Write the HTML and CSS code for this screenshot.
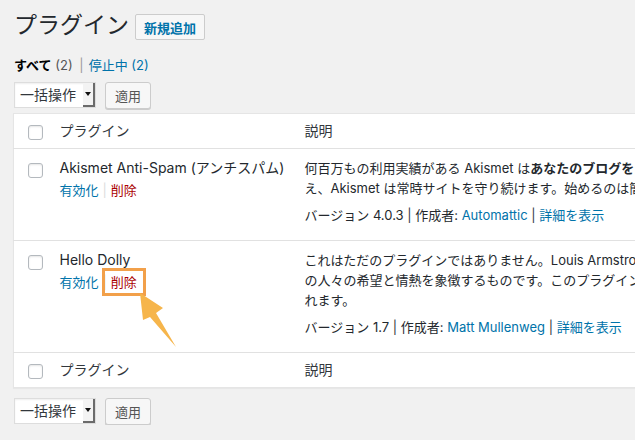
FILE: index.html
```html
<!DOCTYPE html>
<html lang="ja">
<head>
<meta charset="utf-8">
<title>プラグイン</title>
<link rel="stylesheet" href="styles.css">
</head>
<body>
<div class="wrap">
  <div class="page-head">
    <h1 class="page-title">プラグイン</h1>
    <a class="title-action" href="#">新規追加</a>
  </div>
  <ul class="subsubsub">
    <li><span class="current">すべて</span> <span class="count">(2)</span> <span class="sep">|</span></li>
    <li><a href="#">停止中 <span class="count-link">(2)</span></a></li>
  </ul>
  <div class="tablenav">
    <div class="bulk"><span class="bulk-label">一括操作</span><span class="bulk-arrow"><span class="tri"></span></span></div>
    <button class="btn">適用</button>
  </div>
  <table class="plugins">
    <thead>
      <tr>
        <th class="col-check"><span class="cb"></span></th>
        <th class="col-name">プラグイン</th>
        <th class="col-desc">説明</th>
      </tr>
    </thead>
    <tbody>
      <tr>
        <td class="col-check"><span class="cb"></span></td>
        <td class="col-name">
          <div class="plugin-title">Akismet Anti-Spam (アンチスパム)</div>
          <div class="row-actions"><a href="#" class="activate">有効化</a><span class="pipe">|</span><a href="#" class="delete">削除</a></div>
        </td>
        <td class="col-desc">
          <p class="desc">何百万もの利用実績がある Akismet は<strong>あなたのブログをスパムから保護する最良の方法</strong>といえるでしょう。あなたが眠っている間でさ<br>え、Akismet は常時サイトを守り続けます。始めるのは簡単です: Akismet プラグインを有効化し、設定ページで API キーを設定してください。</p>
          <div class="meta">バージョン 4.0.3 <span class="msep">|</span> 作成者: <a href="#">Automattic</a> <span class="msep">|</span> <a href="#">詳細を表示</a></div>
        </td>
      </tr>
      <tr>
        <td class="col-check"><span class="cb"></span></td>
        <td class="col-name">
          <div class="plugin-title">Hello Dolly</div>
          <div class="row-actions"><a href="#" class="activate">有効化</a><span class="pipe">|</span><a href="#" class="delete highlighted">削除</a></div>
        </td>
        <td class="col-desc">
          <p class="desc">これはただのプラグインではありません。Louis Armstrong によって歌われた最も有名な二つの単語に要約された同一世代のすべて<br>の人々の希望と情熱を象徴するものです。このプラグインを有効にすると、すべての管理画面の右上に「ハロー・ドーリー」の歌詞がランダムに表示さ<br>れます。</p>
          <div class="meta">バージョン 1.7 <span class="msep">|</span> 作成者: <a href="#">Matt Mullenweg</a> <span class="msep">|</span> <a href="#">詳細を表示</a></div>
        </td>
      </tr>
    </tbody>
    <tfoot>
      <tr>
        <th class="col-check"><span class="cb"></span></th>
        <th class="col-name">プラグイン</th>
        <th class="col-desc">説明</th>
      </tr>
    </tfoot>
  </table>
  <div class="tablenav bottom">
    <div class="bulk"><span class="bulk-label">一括操作</span><span class="bulk-arrow"><span class="tri"></span></span></div>
    <button class="btn">適用</button>
  </div>
  <svg class="pointer" width="42" height="60" viewBox="0 0 42 60" aria-hidden="true">
    <polygon points="2,2 25,17 18,22 38,56 12,26 5,29" fill="#f6b54b"/>
  </svg>
</div>
</body>
</html>
```
FILE: styles.css
```css
html, body {
  margin: 0;
  padding: 0;
  background: #f1f1f1;
  overflow: hidden;
}
body {
  font-family: "Inter", "Noto Sans CJK JP", sans-serif;
  font-size: 13px;
  color: #23282d;
}
a { color: #0073aa; text-decoration: none; }

.wrap {
  position: relative;
  padding-left: 13px;
  width: 1100px;
}

.page-head {
  display: flex;
  align-items: flex-start;
  padding-top: 11px;
}
.page-title {
  margin: 0 0 0 1px;
  font-size: 23px;
  font-weight: 400;
  line-height: 29px;
  color: #23282d;
}
.title-action {
  margin: 3px 0 0 6px;
  height: 26px;
  box-sizing: border-box;
  display: inline-flex;
  align-items: center;
  padding: 0 8px;
  border: 1px solid #ccc;
  border-radius: 2px;
  background: #f7f7f7;
  font-size: 13px;
  font-weight: 700;
  color: #0073aa;
}

.subsubsub {
  list-style: none;
  margin: 15px 0 0 1px;
  padding: 0;
  display: flex;
  gap: 5px;
  line-height: 20px;
  font-size: 13px;
}
.current { font-weight: 700; color: #000; }
.count { color: #555; }
.sep { color: #999; margin-left: 3px; }
.count-link { color: #0073aa; }

.tablenav {
  display: flex;
  align-items: flex-start;
  margin: 7px 0 0 1px;
  height: 27px;
}
.tablenav.bottom { margin-top: 10px; }
.bulk {
  display: flex;
  height: 26px;
  box-sizing: border-box;
  width: 82px;
  border: 1px solid #ddd;
  background: #fff;
  box-shadow: inset 0 1px 2px rgba(0,0,0,.07);
}
.bulk-label {
  flex: 1;
  padding-left: 5px;
  font-size: 14px;
  line-height: 24px;
  color: #32373c;
}
.bulk-arrow {
  width: 12px;
  height: 24px;
  box-sizing: border-box;
  background: #f3f3f3;
  border-right: 2px solid #6b6b6b;
  border-bottom: 2px solid #6b6b6b;
  display: flex;
  align-items: center;
  justify-content: center;
}
.tri {
  width: 0;
  height: 0;
  border-left: 3px solid transparent;
  border-right: 3px solid transparent;
  border-top: 4px solid #111;
}
.btn {
  margin-left: 9px;
  height: 27px;
  width: 46px;
  padding: 0;
  border: 1px solid #ccc;
  border-radius: 3px;
  background: #f7f7f7;
  box-shadow: 0 1px 0 #ccc;
  font-family: inherit;
  font-size: 13px;
  color: #555;
}

.plugins {
  margin-top: 4px;
  width: 1000px;
  border: 1px solid #e5e5e5;
  border-collapse: collapse;
  background: #fff;
  box-shadow: 0 1px 1px rgba(0,0,0,.04);
  table-layout: fixed;
}
.plugins th, .plugins td {
  text-align: left;
  vertical-align: top;
  padding: 9px 10px 15px;
}
.plugins thead th, .plugins tfoot th {
  font-weight: 400;
  font-size: 14px;
  line-height: 20px;
  padding: 7px 10px;
  color: #32373c;
}
.plugins thead tr { border-bottom: 1px solid #e1e1e1; }
.plugins tbody tr { border-bottom: 1px solid #e1e1e1; }
.plugins .col-check {
  width: 36px;
  box-sizing: border-box;
  padding: 14px 0 0 14px;
}
.plugins thead .col-check, .plugins tfoot .col-check { padding: 11px 0 0 14px; }
.plugins .col-name { width: 245px; box-sizing: border-box; }
.plugins .col-desc { white-space: nowrap; }

.cb {
  display: block;
  width: 15px;
  height: 15px;
  box-sizing: border-box;
  border: 1px solid #b4b9be;
  border-radius: 3px;
  background: #fff;
  box-shadow: inset 0 1px 2px rgba(0,0,0,.1);
}

.plugin-title {
  font-size: 14px;
  line-height: 20px;
  color: #23282d;
}
.row-actions {
  margin-top: 2px;
  font-size: 13px;
  line-height: 21px;
}
.pipe { color: #ddd; margin: 0 4px; }
.delete { color: #a00; }
.highlighted { position: relative; }
.highlighted::after {
  content: "";
  position: absolute;
  left: -9px;
  right: -9px;
  top: 50%;
  height: 28px;
  margin-top: -14px;
  box-sizing: border-box;
  border: 3px solid #f2a04a;
}

.desc {
  margin: 0 0 7px;
  line-height: 20px;
  font-size: 13px;
}
.meta {
  line-height: 20px;
  font-size: 13px;
}
.msep { color: #32373c; }

.pointer {
  position: absolute;
  left: 138px;
  top: 291px;
}
```
